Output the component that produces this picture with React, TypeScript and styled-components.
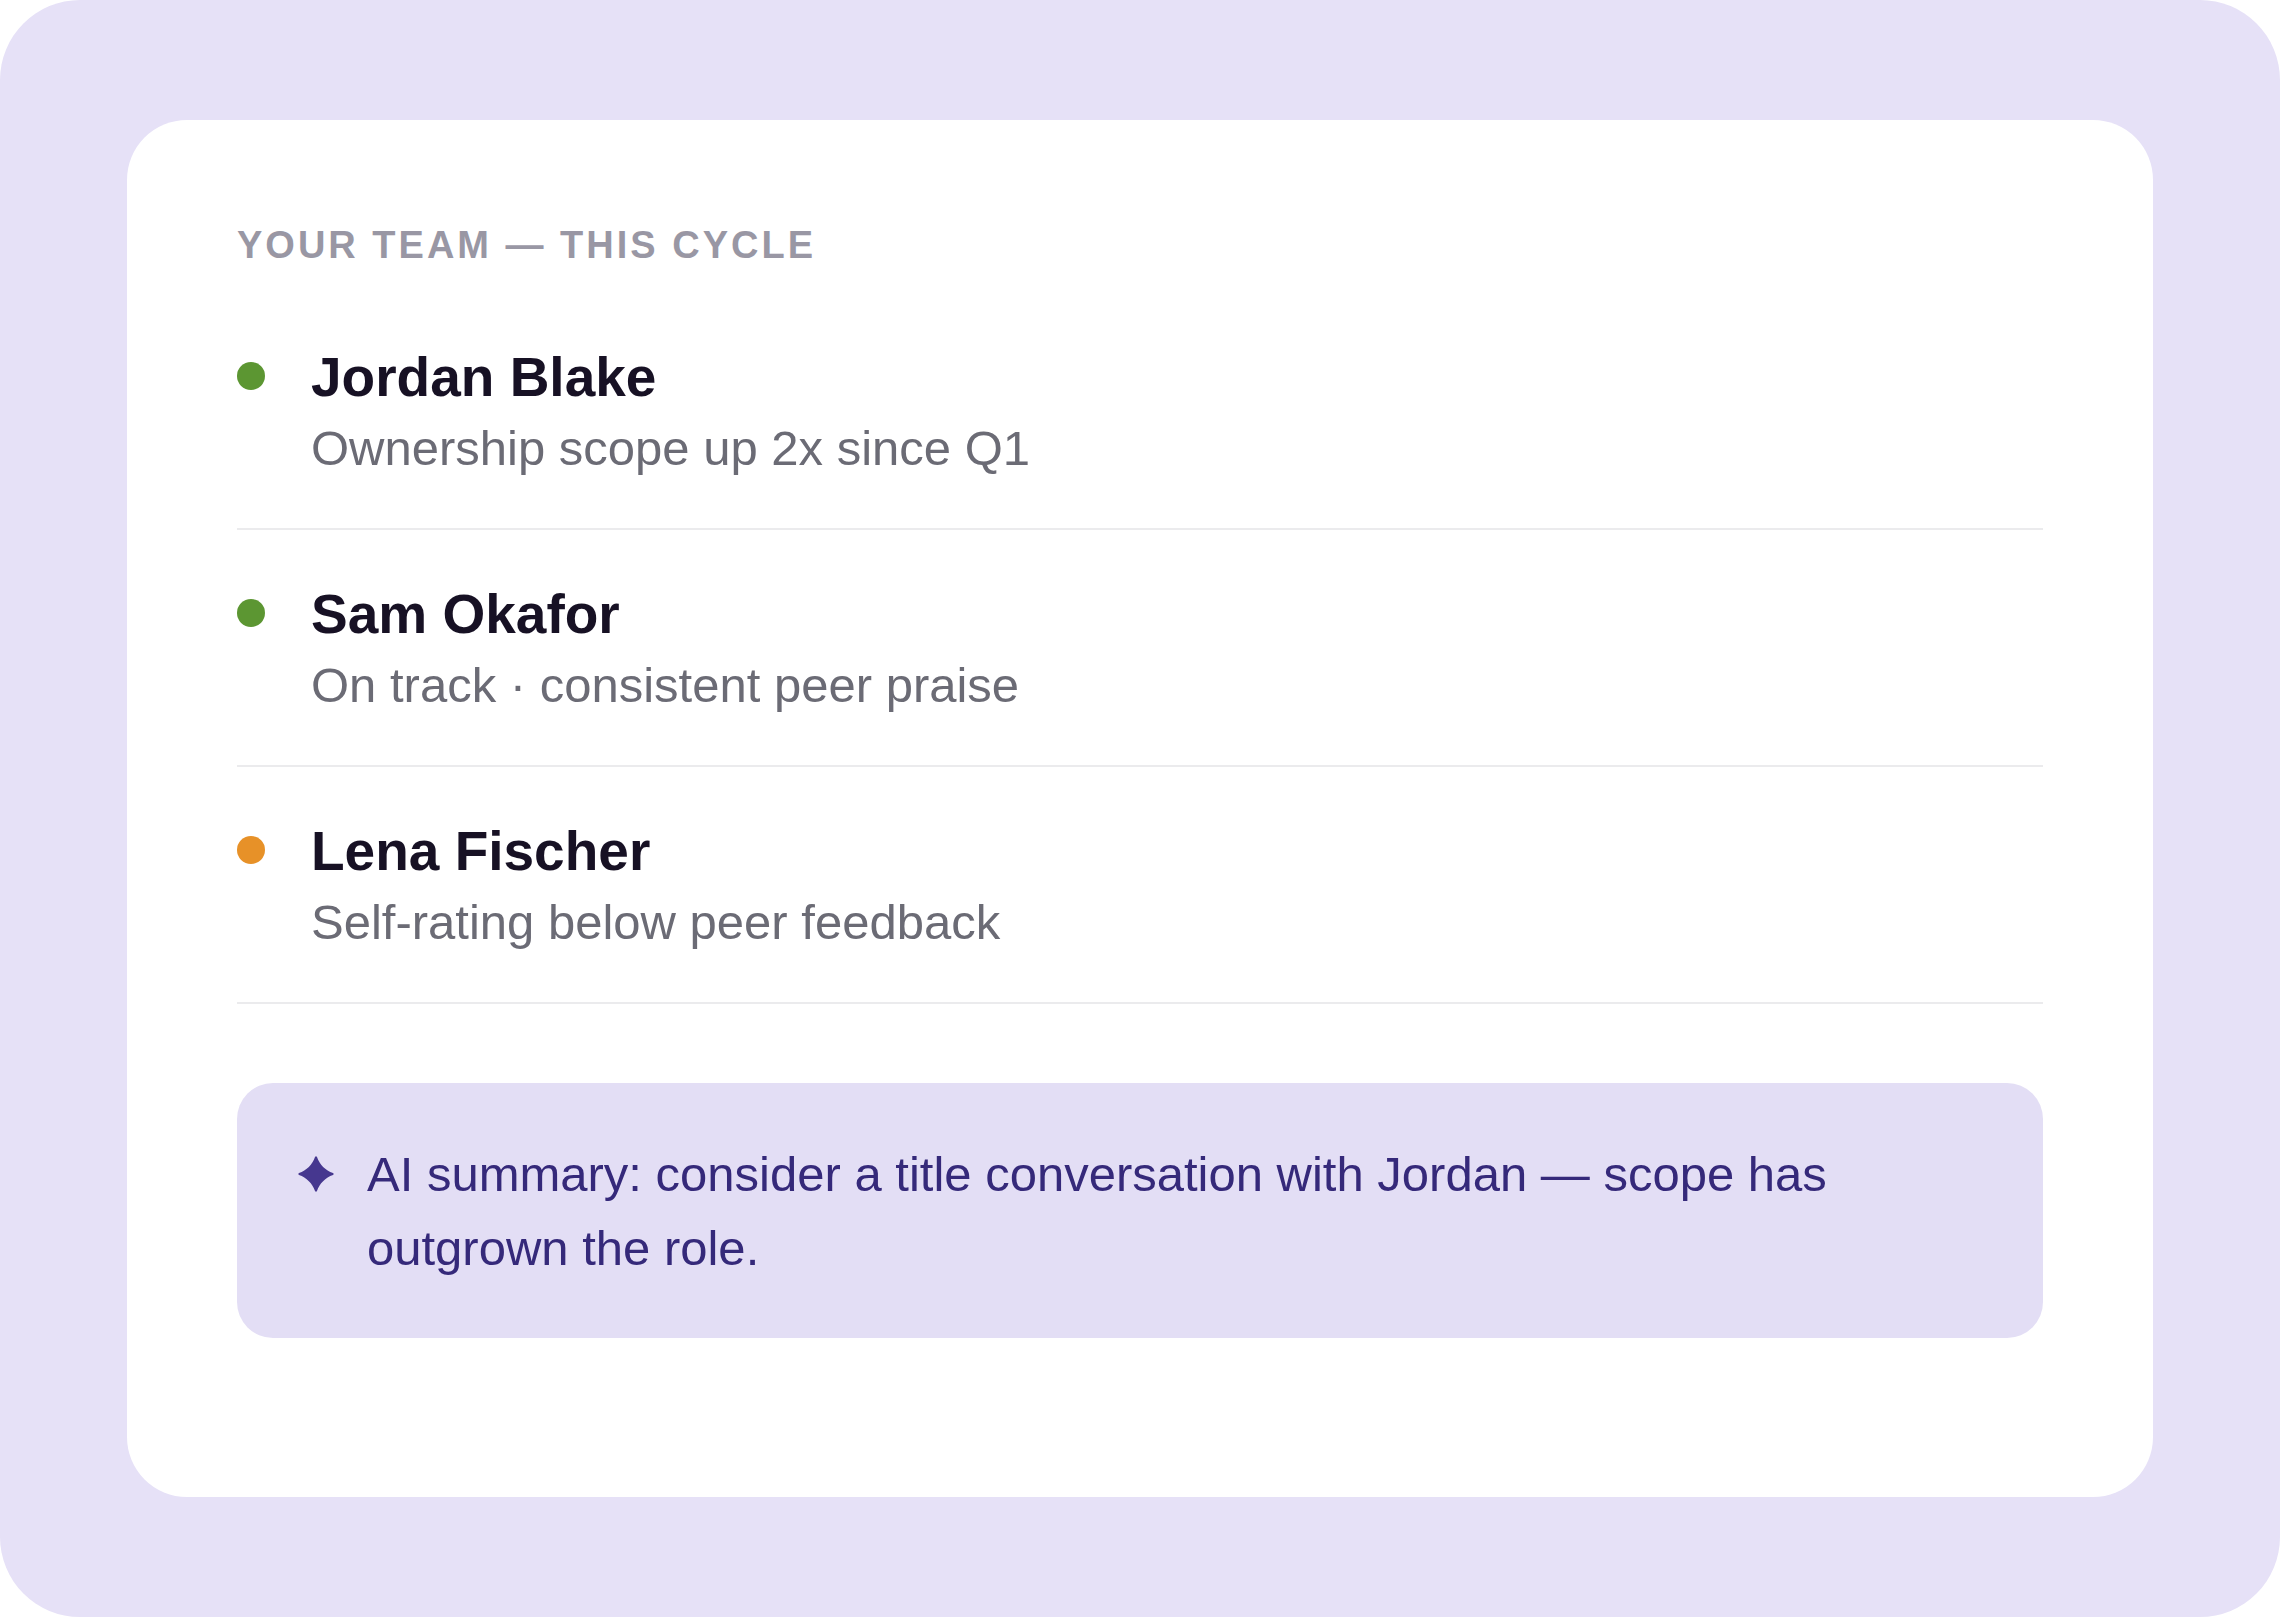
import React from "react";
import styled, { createGlobalStyle } from "styled-components";

const GlobalStyle = createGlobalStyle`
  *, *::before, *::after { box-sizing: border-box; }
  body {
    margin: 0;
    background: #ffffff;
    font-family: "Liberation Sans", Arial, Helvetica, sans-serif;
    -webkit-font-smoothing: antialiased;
  }
`;

const Stage = styled.main`
  display: flex;
  min-height: 100vh;
  padding: 120px 127px;
  border-radius: 80px;
  background: #e6e1f7;
`;

const Card = styled.section`
  flex: 1;
  min-width: 0;
  padding: 100px 110px;
  border-radius: 60px;
  background: #ffffff;
`;

const Heading = styled.h2`
  margin: 0 0 23px;
  color: #9997a4;
  font-size: 38px;
  font-weight: 700;
  line-height: 50px;
  letter-spacing: 3px;
  text-transform: uppercase;
`;

const TeamList = styled.ul`
  margin: 0;
  padding: 0;
  list-style: none;
`;

const Member = styled.li`
  display: flex;
  gap: 46px;
  padding: 45px 0 48px;
  border-bottom: 2px solid #ebebed;
`;

const StatusDot = styled.span<{ $color: string }>`
  flex: none;
  width: 28px;
  height: 28px;
  margin-top: 24px;
  border-radius: 50%;
  background: ${({ $color }) => $color};
`;

const Name = styled.h3`
  margin: 0;
  color: #171124;
  font-size: 55px;
  font-weight: 700;
  line-height: 78px;
`;

const Note = styled.p`
  margin: 0;
  color: #6b6b75;
  font-size: 49px;
  line-height: 64px;
`;

const Summary = styled.aside`
  display: flex;
  gap: 32px;
  margin-top: 79px;
  padding: 54px 60px 53px;
  border-radius: 36px;
  background: #e3def5;
`;

const Sparkle = styled.svg`
  flex: none;
  width: 38px;
  height: 38px;
  margin-top: 18px;
  fill: #46378f;
`;

const SummaryText = styled.p`
  margin: 0;
  color: #35297a;
  font-size: 49px;
  line-height: 74px;
`;

const GREEN = "#5c9632";
const AMBER = "#e79128";

const team = [
  { name: "Jordan Blake", note: "Ownership scope up 2x since Q1", color: GREEN },
  { name: "Sam Okafor", note: "On track · consistent peer praise", color: GREEN },
  { name: "Lena Fischer", note: "Self-rating below peer feedback", color: AMBER },
];

export default function App() {
  return (
    <>
      <GlobalStyle />
      <Stage>
        <Card>
          <Heading>Your team — this cycle</Heading>
          <TeamList>
            {team.map((member) => (
              <Member key={member.name}>
                <StatusDot $color={member.color} />
                <div>
                  <Name>{member.name}</Name>
                  <Note>{member.note}</Note>
                </div>
              </Member>
            ))}
          </TeamList>
          <Summary>
            <Sparkle viewBox="0 0 38 38" aria-hidden="true">
              <path d="M18 2Q19 .4 20 2C22.500 9.500 28.500 15.500 36 18Q37.600 19 36 20C28.500 22.500 22.500 28.500 20 36Q19 37.600 18 36C15.500 28.500 9.500 22.500 2 20Q.4 19 2 18C9.500 15.500 15.500 9.500 18 2Z" />
            </Sparkle>
            <SummaryText>
              AI summary: consider a title conversation with Jordan — scope has outgrown the role.
            </SummaryText>
          </Summary>
        </Card>
      </Stage>
    </>
  );
}
